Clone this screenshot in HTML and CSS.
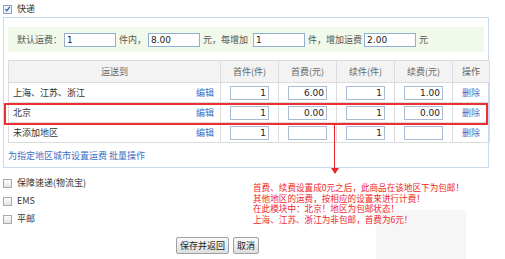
FILE: index.html
```html
<!DOCTYPE html>
<html lang="zh-CN">
<head>
  <meta charset="UTF-8" />
  <title>运费模板</title>
  <link rel="stylesheet" href="styles.css">
</head>
<body>
  <div class="page">
    <!-- express option -->
    <div class="opt opt-main">
      <span class="cb checked">
        <svg width="8" height="8" viewBox="0 0 8 8"><path d="M1.5 4.2 L3.2 6 L6.6 1.6" fill="none" stroke="#2f5fb3" stroke-width="1.4"/></svg>
      </span>快递
    </div>

    <div class="panel">
      <div class="defaults">
        <span>默认运费：</span><input class="txt" value="1"><span>件内，</span><input class="txt" value="8.00"><span class="wide">元，每增加</span><input class="txt" value="1"><span>件，增加运费</span><input class="txt" value="2.00"><span>元</span>
      </div>

      <table class="area-table">
        <thead>
          <tr>
            <th class="col-area" colspan="2">运送到</th>
            <th>首件(件)</th>
            <th>首费(元)</th>
            <th>续件(件)</th>
            <th>续费(元)</th>
            <th class="col-op">操作</th>
          </tr>
        </thead>
        <tbody>
          <tr>
            <td class="area">上海、江苏、浙江</td>
            <td class="edit"><a href="#">编辑</a></td>
            <td><input class="num" value="1"></td>
            <td><input class="num" value="6.00"></td>
            <td><input class="num" value="1"></td>
            <td><input class="num" value="1.00"></td>
            <td class="op"><a href="#">删除</a></td>
          </tr>
          <tr>
            <td class="area">北京</td>
            <td class="edit"><a href="#">编辑</a></td>
            <td><input class="num" value="1"></td>
            <td><input class="num" value="0.00"></td>
            <td><input class="num" value="1"></td>
            <td><input class="num" value="0.00"></td>
            <td class="op"><a href="#">删除</a></td>
          </tr>
          <tr>
            <td class="area">未添加地区</td>
            <td class="edit"><a href="#">编辑</a></td>
            <td><input class="num" value="1"></td>
            <td><input class="num" value=""></td>
            <td><input class="num" value="1"></td>
            <td><input class="num" value=""></td>
            <td class="op"><a href="#">删除</a></td>
          </tr>
        </tbody>
      </table>

      <div class="batch"><a href="#">为指定地区城市设置运费</a> <a href="#">批量操作</a></div>
    </div>

    <div class="opt"><span class="cb"></span>保障速递(物流宝)</div>
    <div class="opt"><span class="cb"></span>EMS</div>
    <div class="opt"><span class="cb"></span>平邮</div>

    <div class="actions">
      <button class="btn">保存并返回</button>
      <button class="btn">取消</button>
    </div>

    <!-- annotation drawn over the form -->
    <div class="smudge"></div>
    <div class="mark-box"></div>
    <div class="mark-line"></div>
    <div class="mark-head"></div>
    <div class="note">
      <p>首费、续费设置成0元之后，此商品在该地区下为包邮！</p>
      <p>其他地区的运费，按相应的设置来进行计费！</p>
      <p>在此模块中：北京！地区为包邮状态！</p>
      <p>上海、江苏、浙江为非包邮，首费为6元！</p>
    </div>
  </div>
</body>
</html>
```

FILE: styles.css
```css
body {
  margin: 0;
  background: #fff;
  font-family: "Noto Sans CJK SC", "DejaVu Sans", sans-serif;
  font-size: 9px;
  color: #333;
  overflow: hidden;
}

a {
  color: #3a6fc8;
  text-decoration: none;
}

.page {
  position: relative;
  width: 505px;
  height: 259px;
}

.opt {
  display: flex;
  align-items: center;
  height: 18px;
  padding-left: 3px;
  line-height: 18px;
}

.opt-main {
  padding-top: 1px;
  height: 16px;
}

.cb {
  display: inline-flex;
  align-items: center;
  justify-content: center;
  width: 7px;
  height: 7px;
  margin-right: 5px;
  border: 1px solid #a9a9a9;
  background: linear-gradient(#fdfdfd, #e4e4e4);
}

.cb.checked {
  background: #eef2fa;
  border-color: #8c9fbf;
}

.panel {
  margin: 0 16px 6px 3px;
  padding: 9px 3px 5px 4px;
  border: 1px solid #c9daf0;
  height: 135px;
}

.defaults {
  display: flex;
  align-items: center;
  height: 25px;
  padding-left: 9px;
  margin: 0 1px 8px 0;
  background: #f1f9ea;
  color: #555;
}

.defaults span {
  margin-right: 2px;
}

.defaults span.wide {
  margin-right: 5px;
}

.txt {
  width: 46px;
  height: 12px;
  margin: 0 3px 0 0;
  padding: 0 2px;
  border: 1px solid #8fb0d4;
  font: 9px "DejaVu Sans", sans-serif;
  color: #222;
}

.area-table {
  border-collapse: collapse;
  width: 479px;
  table-layout: fixed;
}

.area-table th,
.area-table td {
  border: 1px solid #dcdcdc;
  height: 19px;
  padding: 0;
  text-align: center;
}

.area-table th {
  height: 21px;
  background: #f3f3f3;
  font-weight: normal;
  color: #666;
  width: 57px;
}

.area-table th.col-area {
  width: 211px;
}

.area-table th.col-op {
  width: 36px;
}

.area-table td.area {
  text-align: left;
  padding-left: 4px;
  border-right: none;
  width: 170px;
}

.area-table td.edit {
  text-align: right;
  padding-right: 6px;
  border-left: none;
}

.num {
  width: 33px;
  height: 12px;
  padding: 0 2px;
  border: 1px solid #a9bcd4;
  text-align: right;
  font: 9px "DejaVu Sans", sans-serif;
  color: #222;
}

.batch {
  padding: 7px 0 0 0;
  line-height: 12px;
}

.actions {
  display: flex;
  gap: 4px;
  margin: 9px 0 0 176px;
}

.btn {
  height: 17px;
  padding: 0 3px;
  border: 1px solid #a0a0a0;
  border-radius: 2px;
  background: linear-gradient(#fafafa, #dedede);
  font: 9px "Noto Sans CJK SC", sans-serif;
  color: #222;
}

.mark-box {
  position: absolute;
  left: 4px;
  top: 103px;
  width: 480px;
  height: 18px;
  border: 2px solid #ec2f34;
}

.mark-line {
  position: absolute;
  left: 334px;
  top: 123px;
  width: 1px;
  height: 46px;
  background: #e8262b;
}

.mark-head {
  position: absolute;
  left: 331px;
  top: 168px;
  border-left: 4px solid transparent;
  border-right: 4px solid transparent;
  border-top: 6px solid #e8262b;
}

.note {
  position: absolute;
  left: 253px;
  top: 182px;
  color: #f0262b;
  font-size: 8.6px;
  white-space: nowrap;
}

.note p {
  margin: 0;
  height: 10.5px;
  line-height: 10px;
}

.smudge {
  position: absolute;
  left: 376px;
  top: 210px;
  width: 90px;
  height: 49px;
  background: #f6f6f6;
}
```
